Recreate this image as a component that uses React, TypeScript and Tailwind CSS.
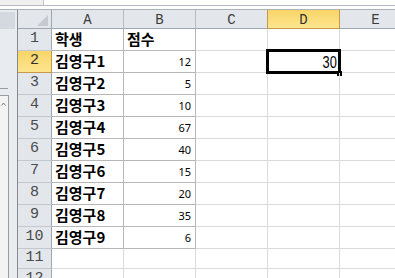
import React from "react";

const monoFont = { fontFamily: '"Liberation Mono", "DejaVu Sans Mono", monospace' };
const krFont = { fontFamily: '"Noto Sans CJK KR", "Noto Sans", sans-serif' };
const numFont = { fontFamily: '"Noto Sans", "Liberation Sans", sans-serif' };

const cols = ["A", "B", "C", "D", "E"];
const scores = [12, 5, 10, 67, 40, 15, 20, 35, 6];

function RowHeader({ n, selected, h }: { n: number; selected?: boolean; h: string }) {
  return (
    <div
      className={
        "w-[34px] shrink-0 flex items-center justify-center text-[15px] border-r border-b " +
        h +
        " " +
        (selected
          ? "bg-gradient-to-b from-[#f8d568] to-[#fde58e] border-r-[#c7974a] border-b-[#c7974a] text-[#333]"
          : "bg-[#e3e7ec] border-r-[#9ea7b2] border-b-[#c2c8cf] text-[#4a4a4a]")
      }
      style={monoFont}
    >
      {n}
    </div>
  );
}

function DataRow({ r }: { r: number }) {
  const inTable = r <= 10;
  const tb = "border-r-[#b7b7b7] border-b-[#b7b7b7]";
  const gl = "border-r-[#d9dadb] border-b-[#d9dadb]";
  let a: React.ReactNode = null;
  let b: React.ReactNode = null;
  if (r === 1) {
    a = "학생";
    b = "점수";
  } else if (r >= 2 && r <= 10) {
    a = `김영구${r - 1}`;
  }
  const h = r === 11 ? "h-[20px]" : "h-[22px]";
  return (
    <div className={"flex shrink-0 " + h}>
      <RowHeader n={r} selected={r === 2} h={h} />
      <div
        className={
          "w-[72px] shrink-0 border-r border-b flex items-center pl-[3px] text-[15px] font-bold text-black whitespace-nowrap " +
          (inTable ? tb : gl)
        }
        style={krFont}
      >
        {a}
      </div>
      <div
        className={
          "w-[72px] shrink-0 border-r border-b flex items-center whitespace-nowrap " +
          (r === 1 ? "pl-[3px] text-[15px] font-bold text-black " : "justify-end pr-[4px] pt-[2px] text-[11px] text-black ") +
          (inTable ? tb : gl)
        }
        style={r === 1 ? krFont : numFont}
      >
        {r === 1 ? b : r >= 2 && r <= 10 ? scores[r - 2] : null}
      </div>
      <div className={"w-[72px] shrink-0 border-r border-b " + gl} />
      <div className={"relative w-[72px] shrink-0 border-r border-b flex items-center justify-end pr-[2px] pt-[2px] " + gl}>
        {r === 2 && (
          <>
            <span
              className="text-[16px] text-black leading-none scale-x-[0.8] origin-right"
              style={{ fontFamily: '"Liberation Sans", Arial, sans-serif' }}
            >
              30
            </span>
            <div className="absolute left-[-2px] top-[-2px] right-[-2px] bottom-[-2px] border-[3px] border-black" />
            <div className="absolute right-[-3px] bottom-[-4px] w-[5px] h-[5px] bg-black" />
          </>
        )}
      </div>
      <div className={"w-[72px] shrink-0 border-r border-b " + gl} />
    </div>
  );
}

export default function App() {
  return (
    <div className="w-[395px] h-[278px] overflow-hidden bg-white flex flex-col">
      {/* top band */}
      <div className="flex h-[6px] shrink-0 border-b border-[#b3bac4]">
        <div className="w-[44px] bg-[#f0f0f0] border-r border-[#c3c3c3]" />
        <div className="flex-1 bg-white" />
      </div>
      <div className="h-[3px] shrink-0 bg-white" />
      {/* main */}
      <div className="flex flex-1 border-t border-[#aab2bc] min-h-0">
        {/* left panel */}
        <div className="w-[18px] shrink-0 bg-[#e8ebef] border-r border-[#868b92] flex flex-col">
          <div className="mt-[2px] w-[15px] h-[17px] bg-[#d4d9e0]" />
          <div className="mt-[59px] w-[8px] h-px bg-[#9c9c9c]" />
          <div className="mt-[6px] w-[9px] flex-1 border-t border-r border-[#9c9c9c] bg-[#f3f3f3] relative">
            <svg className="absolute left-[1px] top-[6px]" width="5" height="4" viewBox="0 0 5 4">
              <path d="M0.5 3.5 L2.5 1 L4.5 3.5" fill="none" stroke="#777" strokeWidth="1" />
            </svg>
          </div>
        </div>
        {/* grid */}
        <div className="flex flex-col flex-1 min-w-0">
          {/* header row */}
          <div className="flex h-[19px] shrink-0">
            <div className="w-[34px] shrink-0 bg-[#e3e7ec] border-r border-b border-r-[#9ea7b2] border-b-[#9ea7b2] relative">
              <svg className="absolute right-[3px] bottom-[2px]" width="11" height="11" viewBox="0 0 11 11">
                <polygon points="11,0 11,11 0,11" fill="#c5cad1" />
              </svg>
            </div>
            {cols.map((c) => {
              const sel = c === "D";
              return (
                <div
                  key={c}
                  className={
                    "w-[72px] shrink-0 flex items-center justify-center pt-[3px] text-[14px] border-r border-b " +
                    (sel
                      ? "bg-gradient-to-b from-[#f8d568] to-[#fde58e] border-r-[#c7974a] border-b-[#c7974a] text-[#333]"
                      : c === "C"
                      ? "bg-[#e3e7ec] border-r-[#c7974a] border-b-[#9ea7b2] text-[#3c3c3c]"
                      : "bg-[#e3e7ec] border-r-[#b5bcc4] border-b-[#9ea7b2] text-[#3c3c3c]")
                  }
                  style={monoFont}
                >
                  {c}
                </div>
              );
            })}
          </div>
          {Array.from({ length: 12 }, (_, i) => (
            <DataRow key={i} r={i + 1} />
          ))}
        </div>
      </div>
    </div>
  );
}
